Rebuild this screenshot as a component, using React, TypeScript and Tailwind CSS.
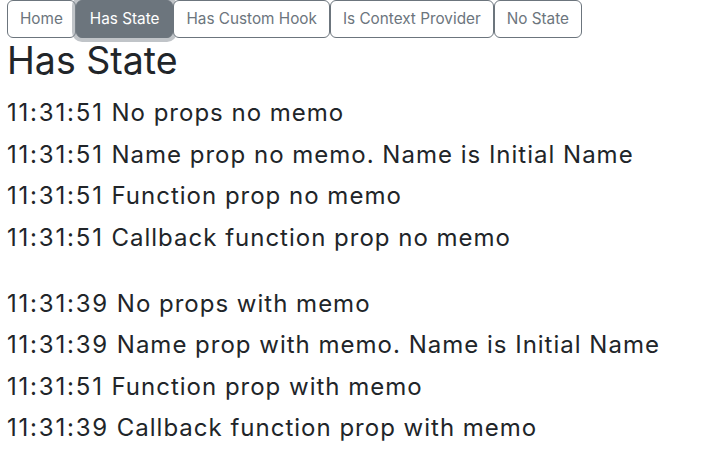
const tabs = ["Home", "Has State", "Has Custom Hook", "Is Context Provider", "No State"];

const noMemo = [
  "11:31:51 No props no memo",
  "11:31:51 Name prop no memo. Name is Initial Name",
  "11:31:51 Function prop no memo",
  "11:31:51 Callback function prop no memo",
];

const withMemo = [
  "11:31:39 No props with memo",
  "11:31:39 Name prop with memo. Name is Initial Name",
  "11:31:51 Function prop with memo",
  "11:31:39 Callback function prop with memo",
];

function Line({ text }: { text: string }) {
  const [time, ...rest] = text.split(" ");
  return (
    <div>
      <span className="tracking-[1.8px]">{time}</span> {rest.join(" ")}
    </div>
  );
}

export default function App() {
  const active = "Has State";
  return (
    <div className="min-h-[456px] bg-white px-[7px] text-[#212529] [font-family:Inter,'Noto_Sans',sans-serif]">
      <nav className="flex">
        {tabs.map((t) => (
          <button
            key={t}
            className={
              t === active
                ? "h-[38px] rounded-[6px] border border-[#6c757d] bg-[#6c757d] px-[13px] text-[15.3px] text-white shadow-[0_0_0_4px_rgba(130,138,145,0.5)]"
                : "h-[38px] rounded-[6px] border border-[#6c757d] bg-white px-[12px] text-[15.3px] text-[#6c757d]"
            }
          >
            {t}
          </button>
        ))}
      </nav>
      <h1 className="mb-[9px] text-[37.5px] leading-[1.2] font-normal">Has State</h1>
      <div className="text-[24px] leading-[41.5px] tracking-[1px]">
        {noMemo.map((l) => (
          <Line key={l} text={l} />
        ))}
        <div className="mt-[24.5px]">
          {withMemo.map((l) => (
            <Line key={l} text={l} />
          ))}
        </div>
      </div>
    </div>
  );
}
